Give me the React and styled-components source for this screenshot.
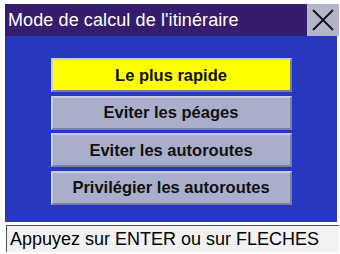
import React from "react";
import styled, { createGlobalStyle } from "styled-components";

const Global = createGlobalStyle`
  html, body { margin: 0; padding: 0; background: #ffffff; }
  body { width: 340px; height: 254px; overflow: hidden; font-family: "Liberation Sans", Arial, sans-serif; }
`;

const Screen = styled.div`
  width: 334px;
  margin: 4px 0 0 5px;
  display: flex;
  flex-direction: column;
`;

const TitleBar = styled.div`
  height: 32px;
  display: flex;
  align-items: stretch;
  background: #361c6c;
`;

const Title = styled.div`
  flex: 1;
  display: flex;
  align-items: center;
  padding-left: 3px;
  color: #ffffff;
  font-size: 18px;
  letter-spacing: 0.1px;
`;

const Close = styled.div`
  width: 32px;
  display: flex;
  align-items: center;
  justify-content: center;
  background: #b3b6cb;
`;

const Body = styled.div`
  width: 332px;
  height: 186px;
  background: #2637c0;
  display: flex;
  flex-direction: column;
  align-items: center;
  padding-top: 22px;
  box-sizing: border-box;
  gap: 3.67px;
`;

const Option = styled.div`
  width: 241px;
  height: 34px;
  box-sizing: border-box;
  display: flex;
  align-items: center;
  justify-content: center;
  background: ${(p) => (p.$active ? "#ffff00" : "#a9aecb")};
  border: 2px solid;
  border-color: #c8cce0 #7a7f9e #7a7f9e #c8cce0;
  color: #111111;
  font-weight: bold;
  font-size: 16.5px;
`;

const Status = styled.div`
  margin-top: 3px;
  height: 27px;
  width: 333px;
  margin-left: 1px;
  box-sizing: border-box;
  background: #f2f2f2;
  border-top: 1px solid #555555;
  border-left: 1px solid #555555;
  display: flex;
  align-items: center;
  padding-left: 3px;
  color: #000000;
  font-size: 18px;
`;

const options = [
  "Le plus rapide",
  "Eviter les péages",
  "Eviter les autoroutes",
  "Privilégier les autoroutes",
];

export default function App() {
  return (
    <>
      <Global />
      <Screen>
        <TitleBar>
          <Title>Mode de calcul de l'itinéraire</Title>
          <Close>
            <svg width="24" height="24" viewBox="0 0 24 24">
              <path d="M2 2 L22 22 M22 2 L2 22" stroke="#111" strokeWidth="1.8" fill="none" />
            </svg>
          </Close>
        </TitleBar>
        <Body>
          {options.map((o, i) => (
            <Option key={o} $active={i === 0}>{o}</Option>
          ))}
        </Body>
        <Status>Appuyez sur ENTER ou sur FLECHES</Status>
      </Screen>
    </>
  );
}
